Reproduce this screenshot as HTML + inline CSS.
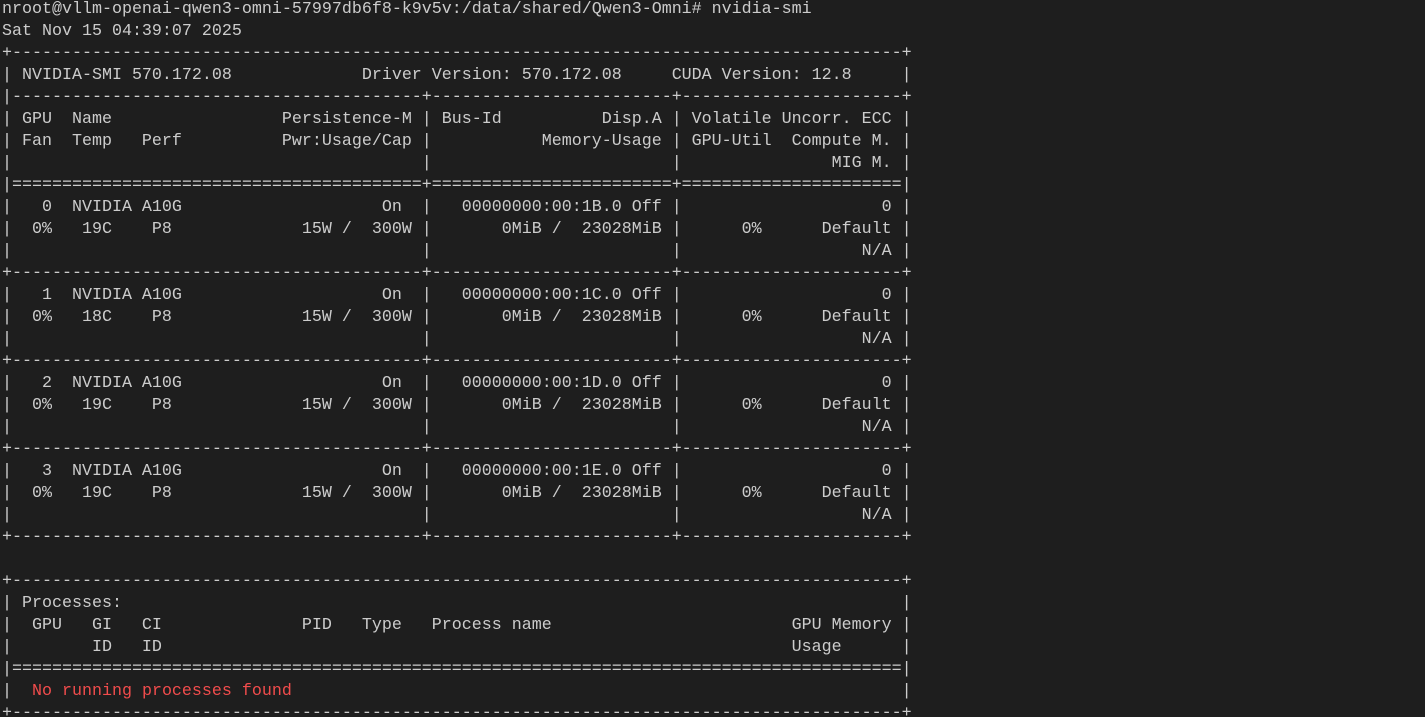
<!DOCTYPE html>
<html><head><meta charset="utf-8"><style>
html,body{margin:0;padding:0;background:#1e1e1e;width:1425px;height:717px;overflow:hidden}
pre{margin:-1px 0 0 0;padding:0 0 0 2px;font-family:"Liberation Mono",monospace;font-size:16.67px;line-height:22px;color:#cccccc;white-space:pre}
.r{color:#f14c4c}
</style></head><body><pre>nroot@vllm-openai-qwen3-omni-57997db6f8-k9v5v:/data/shared/Qwen3-Omni# nvidia-smi
Sat Nov 15 04:39:07 2025
+-----------------------------------------------------------------------------------------+
| NVIDIA-SMI 570.172.08             Driver Version: 570.172.08     CUDA Version: 12.8     |
|-----------------------------------------+------------------------+----------------------+
| GPU  Name                 Persistence-M | Bus-Id          Disp.A | Volatile Uncorr. ECC |
| Fan  Temp   Perf          Pwr:Usage/Cap |           Memory-Usage | GPU-Util  Compute M. |
|                                         |                        |               MIG M. |
|=========================================+========================+======================|
|   0  NVIDIA A10G                    On  |   00000000:00:1B.0 Off |                    0 |
|  0%   19C    P8             15W /  300W |       0MiB /  23028MiB |      0%      Default |
|                                         |                        |                  N/A |
+-----------------------------------------+------------------------+----------------------+
|   1  NVIDIA A10G                    On  |   00000000:00:1C.0 Off |                    0 |
|  0%   18C    P8             15W /  300W |       0MiB /  23028MiB |      0%      Default |
|                                         |                        |                  N/A |
+-----------------------------------------+------------------------+----------------------+
|   2  NVIDIA A10G                    On  |   00000000:00:1D.0 Off |                    0 |
|  0%   19C    P8             15W /  300W |       0MiB /  23028MiB |      0%      Default |
|                                         |                        |                  N/A |
+-----------------------------------------+------------------------+----------------------+
|   3  NVIDIA A10G                    On  |   00000000:00:1E.0 Off |                    0 |
|  0%   19C    P8             15W /  300W |       0MiB /  23028MiB |      0%      Default |
|                                         |                        |                  N/A |
+-----------------------------------------+------------------------+----------------------+

+-----------------------------------------------------------------------------------------+
| Processes:                                                                              |
|  GPU   GI   CI              PID   Type   Process name                        GPU Memory |
|        ID   ID                                                               Usage      |
|=========================================================================================|
|  <span class="r">No running processes found</span>                                                             |
+-----------------------------------------------------------------------------------------+
</pre></body></html>
